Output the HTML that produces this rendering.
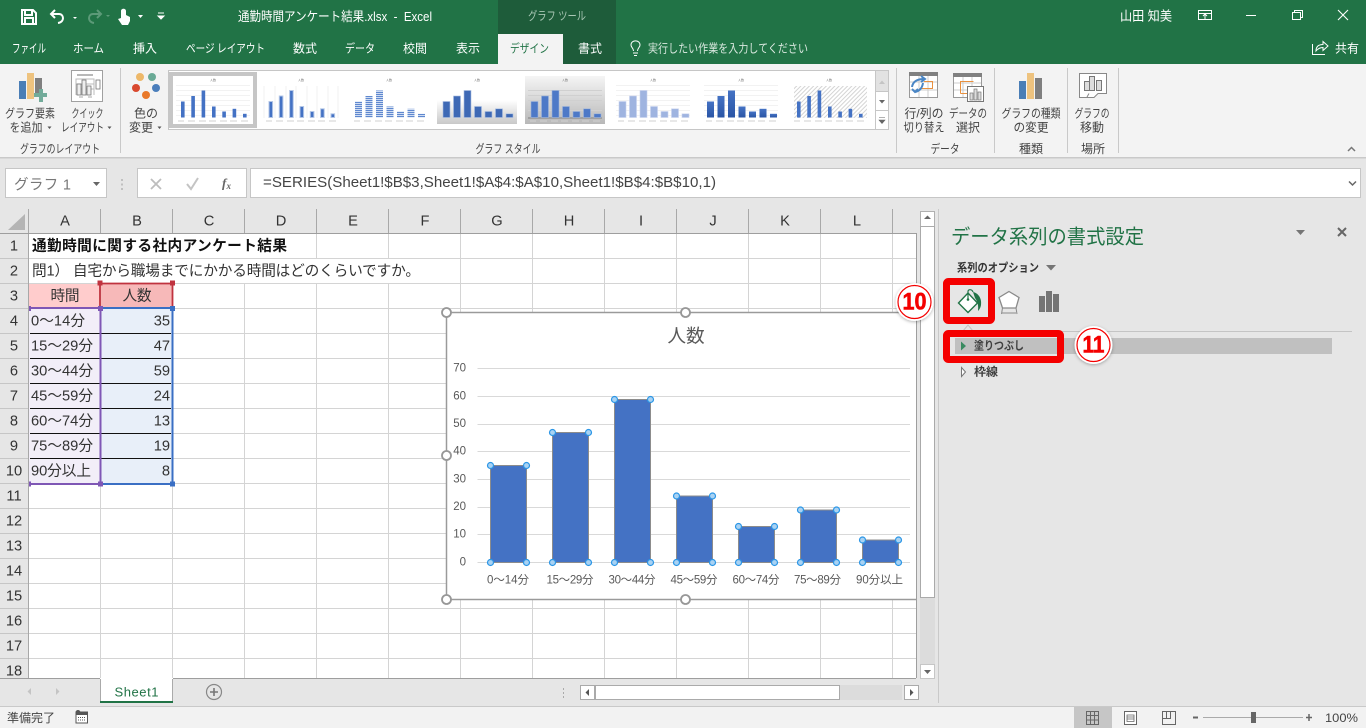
<!DOCTYPE html>
<html lang="ja"><head><meta charset="utf-8"><title>通勤時間アンケート結果.xlsx - Excel</title>
<style>
html,body{margin:0;padding:0;width:1366px;height:728px;overflow:hidden;background:#e6e6e6}
svg{display:block;position:absolute;left:0;top:0}
text{font-family:"Liberation Sans","Noto Sans CJK JP",sans-serif;font-size:12px;dominant-baseline:central;fill:#444;white-space:pre;transform:translateY(1px)}
.w{fill:#fff}.m{text-anchor:middle}.e{text-anchor:end}
.c{font-size:14.67px;fill:#333}
.h{font-size:14.67px;fill:#333;text-anchor:middle}
.ax{font-size:11.5px;fill:#595959}
.r{font-size:12px;fill:#444}
.th{font-size:3px;fill:#777;text-anchor:middle;transform:none}
</style></head><body>
<svg width="1366" height="728" viewBox="0 0 1366 728" xmlns="http://www.w3.org/2000/svg">
<defs>
<g id="bars"><rect x="8" y="25.5" width="3.6" height="16"/><rect x="18.3" y="20" width="3.6" height="21.5"/><rect x="28.6" y="14.5" width="3.6" height="27"/><rect x="39" y="30.5" width="3.6" height="11"/><rect x="49.3" y="35.5" width="3.6" height="6"/><rect x="59.6" y="32.8" width="3.6" height="8.7"/><rect x="70" y="37.8" width="3.6" height="3.7"/></g>
<g id="wide"><rect x="6" y="25.5" width="7" height="16"/><rect x="16.5" y="20" width="7" height="21.5"/><rect x="27" y="14.5" width="7" height="27"/><rect x="37.5" y="30.5" width="7" height="11"/><rect x="48" y="35.5" width="7" height="6"/><rect x="58.5" y="32.8" width="7" height="8.7"/><rect x="69" y="37.8" width="7" height="3.7"/></g>
<path id="gl" d="M3 9.5H77M3 14.5H77M3 19.5H77M3 24.5H77M3 29.5H77M3 34.5H77M3 39.5H77" stroke="#f2f2f2" stroke-width="1" fill="none"/>
<path id="lb" d="M5 45H11M15 45H22M26 45H33M36 45H43M47 45H54M57 45H64M68 45H75" stroke="#d0d0d0" stroke-width="1" fill="none"/>
<pattern id="hatch" width="3" height="3" patternUnits="userSpaceOnUse" patternTransform="rotate(45)"><rect width="3" height="3" fill="#fff"/><rect width="1" height="3" fill="#d4d4d4"/></pattern>
<pattern id="stripe" width="2" height="2" patternUnits="userSpaceOnUse"><rect width="2" height="1" fill="#5f88cf"/><rect y="1" width="2" height="1" fill="#cfdcf2"/></pattern>
<linearGradient id="gw" x1="0" y1="0" x2="0" y2="1"><stop offset="0" stop-color="#fff"/><stop offset=".5" stop-color="#fff"/><stop offset="1" stop-color="#c8c8c8"/></linearGradient>
<linearGradient id="gg" x1="0" y1="0" x2="0" y2="1"><stop offset="0" stop-color="#f5f5f5"/><stop offset="1" stop-color="#b8b8b8"/></linearGradient>
<linearGradient id="gb" x1="0" y1="0" x2="0" y2="1"><stop offset="0" stop-color="#4472c4"/><stop offset="1" stop-color="#2a55a5"/></linearGradient>
<filter id="sh" x="-30%" y="-30%" width="160%" height="160%"><feDropShadow dx="0" dy="1" stdDeviation="1.5" flood-color="#000" flood-opacity=".3"/></filter>
</defs>

<!-- title bar -->
<rect width="1366" height="64" fill="#217346"/>
<rect x="498" width="118" height="64" fill="#1e5c3a"/>
<rect x="498" y="34" width="65" height="30" fill="#f3f3f3"/>
<path d="M22 10H33L36 13V24H22ZM25 10V15H32V10M25 24V18H33V24" fill="none" stroke="#fff" stroke-width="2"/>
<path d="M55 10L51 14L55 18M52 14H59C64 14 65 22 58 23" fill="none" stroke="#fff" stroke-width="2"/>
<path d="M73 17L75 19L77 17Z" fill="#fff"/>
<path d="M97 10L101 14L97 18M100 14H93C88 14 87 22 94 23" fill="none" stroke="#5c9a78" stroke-width="2"/>
<path d="M106 15L108 17L110 15Z" fill="#5c9a78"/>
<path d="M121 18V11C121 8 126 8 126 11V15L130 17V21L128 25H122L118 19Z" fill="#fff"/>
<path d="M138 15L143 15L140.500 18Z" fill="#fff"/>
<path d="M158 13H164M158 16L164 16L161 19Z" stroke="#fff" fill="#fff" stroke-width="1"/>
<text class="w" x="238" y="15.500" style="font-size:13px" textLength="194" lengthAdjust="spacingAndGlyphs">通勤時間アンケート結果.xlsx  -  Excel</text>
<text x="528" y="15" style="fill:#a9c7b5;font-size:12px" textLength="58" lengthAdjust="spacingAndGlyphs">グラフ ツール</text>
<text class="w" x="1120" y="15" style="font-size:13px" textLength="52" lengthAdjust="spacingAndGlyphs">山田 知美</text>
<path d="M1198.500 10.500H1211.500V19.500H1198.500ZM1198.500 13.500H1211.500M1205 19V14.500M1203 16L1205 14L1207 16" fill="none" stroke="#fff"/>
<path d="M1246 15.500H1256" stroke="#fff"/>
<path d="M1292.500 12.500H1300.500V19.500H1292.500ZM1294.500 12V10.500H1302.500V17.500H1301" fill="none" stroke="#fff"/>
<path d="M1338 10L1348 20M1348 10L1338 20" stroke="#fff" stroke-width="1.100"/>
<text class="w" x="12" y="47.500" textLength="34" lengthAdjust="spacingAndGlyphs">ファイル</text>
<text class="w" x="73" y="47.500" textLength="31" lengthAdjust="spacingAndGlyphs">ホーム</text>
<text class="w" x="133" y="47.500" textLength="24" lengthAdjust="spacingAndGlyphs">挿入</text>
<text class="w" x="186" y="47.500" textLength="79" lengthAdjust="spacingAndGlyphs">ページ レイアウト</text>
<text class="w" x="293" y="47.500" textLength="24" lengthAdjust="spacingAndGlyphs">数式</text>
<text class="w" x="345" y="47.500" textLength="30" lengthAdjust="spacingAndGlyphs">データ</text>
<text class="w" x="403" y="47.500" textLength="24" lengthAdjust="spacingAndGlyphs">校閲</text>
<text class="w" x="456" y="47.500" textLength="24" lengthAdjust="spacingAndGlyphs">表示</text>
<text x="510" y="47.500" style="fill:#217346" textLength="39" lengthAdjust="spacingAndGlyphs">デザイン</text>
<text class="w" x="578" y="47.500" textLength="24" lengthAdjust="spacingAndGlyphs">書式</text>
<path d="M633 53H638M634 55.500H637M633.500 51C633.500 48 631 47.500 631 45C631 39.500 640 39.500 640 45C640 47.500 637.500 48 637.500 51" fill="none" stroke="#fff"/>
<text x="648" y="47.500" style="fill:#d9e8df" textLength="160" lengthAdjust="spacingAndGlyphs">実行したい作業を入力してください</text>
<path d="M1312.500 44V54.500H1325M1316 51C1316 46 1319 44.500 1323 44.500V41.500L1328 46L1323 50.500V47.500C1320 47.500 1318 48.500 1316 51Z" fill="none" stroke="#fff"/>
<text class="w" x="1335" y="47.500" textLength="24" lengthAdjust="spacingAndGlyphs">共有</text>

<!-- ribbon -->
<rect y="64" width="1366" height="93" fill="#f3f3f3"/>
<rect y="157" width="1366" height="1.500" fill="#c9c9c9"/>
<path d="M120.500 68V153M896.500 68V153M994.500 68V153M1067.500 68V153M1118.500 68V153" stroke="#c9c9c9"/>
<rect x="19" y="81" width="7" height="18" fill="#4a7eb6"/><rect x="27" y="73" width="7" height="26" fill="#eec37f"/><rect x="35" y="78" width="7" height="19" fill="#7f7f7f"/>
<path d="M39 89H43V93H47V97H43V102H39V97H34V93H39Z" fill="#72ab9a"/>
<rect x="71.500" y="70.500" width="31" height="31" fill="#fff" stroke="#a0a0a0"/>
<path d="M77 75H93" stroke="#a0a0a0" stroke-width="1.500"/>
<path d="M76 95V79H94V95M76 84H94M76 89H94" fill="none" stroke="#bbb"/>
<rect x="77" y="84" width="4" height="11" fill="#eee" stroke="#777" stroke-width=".8"/><rect x="82" y="80" width="4" height="15" fill="#eee" stroke="#777" stroke-width=".8"/><rect x="87" y="86" width="4" height="9" fill="#eee" stroke="#777" stroke-width=".8"/>
<rect x="96" y="80" width="4" height="9" fill="#fff" stroke="#777" stroke-width=".8"/><path d="M79 97H83M88 97H92" stroke="#aaa"/>
<circle cx="140" cy="77" r="4" fill="#edb869"/><circle cx="152" cy="77" r="4" fill="#6aaa96"/><circle cx="136" cy="88" r="4" fill="#d9492f"/><circle cx="156" cy="88" r="4" fill="#4a7ebb"/><circle cx="146" cy="95" r="4" fill="#e9792a"/>
<text class="m r" x="30" y="112.500" textLength="50" lengthAdjust="spacingAndGlyphs">グラフ要素</text>
<text class="m r" x="26" y="126.500" textLength="33" lengthAdjust="spacingAndGlyphs">を追加</text><path d="M47.500 126.500H51.500L49.500 129Z" fill="#555"/>
<text class="m r" x="87.500" y="112.500" textLength="32" lengthAdjust="spacingAndGlyphs">クイック</text>
<text class="m r" x="82.500" y="126.500" textLength="43" lengthAdjust="spacingAndGlyphs">レイアウト</text><path d="M107.500 126.500H111.500L109.500 129Z" fill="#555"/>
<text class="m r" x="146" y="112.500" textLength="24" lengthAdjust="spacingAndGlyphs">色の</text>
<text class="m r" x="141" y="126.500" textLength="24" lengthAdjust="spacingAndGlyphs">変更</text><path d="M157.500 126.500H161.500L159.500 129Z" fill="#555"/>
<text class="m r" x="60" y="148" textLength="80" lengthAdjust="spacingAndGlyphs">グラフのレイアウト</text>
<text class="m r" x="508" y="148" textLength="65" lengthAdjust="spacingAndGlyphs">グラフ スタイル</text>
<text class="m r" x="945" y="148" textLength="29" lengthAdjust="spacingAndGlyphs">データ</text>
<text class="m r" x="1031" y="148" textLength="24" lengthAdjust="spacingAndGlyphs">種類</text>
<text class="m r" x="1093" y="148" textLength="24" lengthAdjust="spacingAndGlyphs">場所</text>
<text class="m r" x="924" y="112.500" textLength="39" lengthAdjust="spacingAndGlyphs">行/列の</text>
<text class="m r" x="924" y="126.500" textLength="41" lengthAdjust="spacingAndGlyphs">切り替え</text>
<text class="m r" x="968" y="112.500" textLength="38" lengthAdjust="spacingAndGlyphs">データの</text>
<text class="m r" x="968" y="126.500" textLength="24" lengthAdjust="spacingAndGlyphs">選択</text>
<text class="m r" x="1031" y="112.500" textLength="59" lengthAdjust="spacingAndGlyphs">グラフの種類</text>
<text class="m r" x="1031" y="126.500" textLength="35" lengthAdjust="spacingAndGlyphs">の変更</text>
<text class="m r" x="1092" y="112.500" textLength="35" lengthAdjust="spacingAndGlyphs">グラフの</text>
<text class="m r" x="1092" y="126.500" textLength="24" lengthAdjust="spacingAndGlyphs">移動</text>
<path d="M1348 151L1351.500 147.500L1355 151" fill="none" stroke="#777" stroke-width="1.500"/>

<!-- ribbon right icons -->
<rect x="909.500" y="72.500" width="28" height="25" fill="#fff" stroke="#999"/><rect x="909" y="72" width="29" height="4" fill="#808080"/>
<path d="M919 76V97M928 76V97M910 82H937M910 90H937" stroke="#ccc"/><path d="M919.500 88.500H932.500V81.500H924" fill="none" stroke="#e9913f"/><path d="M912 87C913 81 918 79 924 79M921 76L925 79L921 82M923 83C922 89 919 91 915 92M912 89L915 92L918 89" fill="none" stroke="#4a86c5" stroke-width="2"/>
<rect x="953.500" y="73.500" width="28" height="24" fill="#fff" stroke="#999"/><rect x="953" y="73" width="29" height="4" fill="#808080"/>
<path d="M963 77V97M972 77V97M954 83H981M954 90H981" stroke="#ccc"/><path d="M960.500 93.500V81.500H973.500M960.500 93.500H968" fill="none" stroke="#e9913f"/>
<rect x="967.500" y="86.500" width="16" height="15" fill="#fff" stroke="#777"/><rect x="970" y="93" width="3" height="7" fill="#ddd" stroke="#777" stroke-width=".7"/><rect x="974" y="89" width="3" height="11" fill="#ddd" stroke="#777" stroke-width=".7"/><rect x="978" y="92" width="3" height="8" fill="#ddd" stroke="#777" stroke-width=".7"/>
<rect x="1019" y="81" width="7" height="18" fill="#4a7eb6"/><rect x="1027" y="73" width="7" height="26" fill="#eec37f"/><rect x="1035" y="78" width="7" height="21" fill="#7f7f7f"/>
<path d="M1079.500 73.500H1106.500V93.500H1098L1094 97.500H1079.500Z" fill="#fff" stroke="#888"/><path d="M1089 93.500L1087 97" stroke="#888"/>
<rect x="1084.500" y="81.500" width="5" height="9" fill="#ddd" stroke="#777"/><rect x="1089.500" y="76.500" width="5" height="14" fill="#ddd" stroke="#777"/><rect x="1096.500" y="80.500" width="5" height="10" fill="#ddd" stroke="#777"/>

<!-- gallery -->
<rect x="168.500" y="70.500" width="720" height="59" fill="#fff" stroke="#c6c6c6"/>
<rect x="168" y="72" width="89" height="56" fill="#c6c6c6"/>
<rect x="875" y="71" width="13" height="20" fill="#e2e2e2"/><path d="M875.500 70V129M875 91.500H888M875 110.500H888" stroke="#c6c6c6"/>
<path d="M879 84H885L882 80.500Z" fill="#c4c4c4"/><path d="M879 100H885L882 103.500Z" fill="#666"/><path d="M879 117.500H885M879 120H885L882 123.500Z" fill="#666" stroke="#666" stroke-width=".6"/>
<g transform="translate(173,76)"><rect width="80" height="48" fill="#fff"/><use href="#gl"/><use href="#bars" fill="#4472c4"/><use href="#lb"/><text class="th" x="40" y="4">人数</text></g>
<g transform="translate(261,76)"><rect width="80" height="48" fill="#fff"/><path d="M3 10V42M14 10V42M25 10V42M35 10V42M46 10V42M56 10V42M67 10V42M77 10V42" stroke="#f2f2f2"/><use href="#bars" fill="#4472c4" stroke="#b4c7e7" stroke-width="1"/><use href="#lb"/><text class="th" x="40" y="4">人数</text></g>
<g transform="translate(349,76)"><rect width="80" height="48" fill="#fff"/><use href="#wide" fill="url(#stripe)"/><use href="#lb"/><text class="th" x="40" y="4">人数</text></g>
<g transform="translate(437,76)"><rect width="80" height="48" fill="url(#gw)"/><use href="#wide" fill="#3e69b5" stroke="#a8bde2" stroke-width=".6"/><use href="#lb"/><text class="th" x="40" y="4">人数</text></g>
<g transform="translate(525,76)"><rect width="80" height="48" fill="url(#gg)"/><path d="M3 14.500H77M3 19.500H77M3 24.500H77M3 29.500H77M3 34.500H77" stroke="#d0d0d0"/><rect x="3" y="41" width="74" height="2" fill="#a0a0a0"/><use href="#wide" fill="#4d79c7" stroke="#9db4da" stroke-width=".6"/><use href="#lb"/><text class="th" x="40" y="4">人数</text></g>
<g transform="translate(613,76)"><rect width="80" height="48" fill="#fff"/><use href="#gl"/><use href="#wide" fill="#9fb4e0" stroke="#c8d3ee" stroke-width=".6"/><use href="#lb"/><text class="th" x="40" y="4">人数</text></g>
<g transform="translate(701,76)"><rect width="80" height="48" fill="#fff"/><use href="#gl"/><use href="#wide" fill="url(#gb)"/><use href="#lb"/><text class="th" x="40" y="4">人数</text></g>
<g transform="translate(789,76)"><rect width="80" height="48" fill="#fff"/><rect x="5" y="10" width="73" height="32" fill="url(#hatch)"/><use href="#bars" fill="#4472c4"/><use href="#lb"/><text class="th" x="40" y="4">人数</text></g>

<!-- formula bar -->
<rect x="5.500" y="168.500" width="101" height="29" fill="#fff" stroke="#c6c6c6"/>
<text x="14" y="184.500" style="font-size:14.500px;fill:#777" textLength="57" lengthAdjust="spacing">グラフ 1</text>
<path d="M93 182H100L96.500 186Z" fill="#666"/>
<path d="M122 179V181M122 183.500V185.500M122 188V190" stroke="#999"/>
<rect x="137.500" y="168.500" width="109" height="29" fill="#fff" stroke="#c6c6c6"/>
<path d="M151 179L161 189M161 179L151 189" stroke="#bdbdbd" stroke-width="1.800"/>
<path d="M187 184L191 189L198 178" fill="none" stroke="#c4c4c4" stroke-width="2"/>
<text x="222" y="182" style="font:italic bold 13px 'Liberation Serif',serif;fill:#666">f</text><text x="226.500" y="185" style="font:italic bold 9px 'Liberation Serif',serif;fill:#666">x</text>
<rect x="250.500" y="168.500" width="1110" height="29" fill="#fff" stroke="#c6c6c6"/>
<text x="263" y="182" style="font-size:14.670px;fill:#444" textLength="453" lengthAdjust="spacingAndGlyphs">=SERIES(Sheet1!$B$3,Sheet1!$A$4:$A$10,Sheet1!$B$4:$B$10,1)</text>
<path d="M1349 181.500L1352.500 185L1356 181.500" fill="none" stroke="#666" stroke-width="1.500"/>

<!-- sheet grid -->
<rect x="29" y="234" width="887" height="444" fill="#fff"/>
<path d="M100.500 234V678M172.500 234V678M244.500 234V678M316.500 234V678M388.500 234V678M460.500 234V678M532.500 234V678M604.500 234V678M676.500 234V678M748.500 234V678M820.500 234V678M892.500 234V678M29 258.500H916M29 283.500H916M29 308.500H916M29 333.500H916M29 358.500H916M29 383.500H916M29 408.500H916M29 433.500H916M29 458.500H916M29 483.500H916M29 508.500H916M29 533.500H916M29 558.500H916M29 583.500H916M29 608.500H916M29 633.500H916M29 658.500H916" stroke="#d4d4d4" fill="none"/>
<path d="M100.500 234V258M172.500 234V258M244.500 234V258M100.500 259V283M172.500 259V283M244.500 259V283M316.500 259V283M388.500 259V283" stroke="#fff"/>
<!-- headers -->
<path d="M28.500 209V678M100.500 209V233M172.500 209V233M244.500 209V233M316.500 209V233M388.500 209V233M460.500 209V233M532.500 209V233M604.500 209V233M676.500 209V233M748.500 209V233M820.500 209V233M892.500 209V233" stroke="#a8a8a8"/>
<path d="M0 233.500H916M0 678.500H916M916.500 233V678" stroke="#9e9e9e"/>
<path d="M0 258.500H28M0 283.500H28M0 308.500H28M0 333.500H28M0 358.500H28M0 383.500H28M0 408.500H28M0 433.500H28M0 458.500H28M0 483.500H28M0 508.500H28M0 533.500H28M0 558.500H28M0 583.500H28M0 608.500H28M0 633.500H28M0 658.500H28" stroke="#c6c6c6"/>
<path d="M8 230H25V214Z" fill="#b4b4b4"/>
<text class="h" x="65" y="220.500">A</text><text class="h" x="137" y="220.500">B</text><text class="h" x="209" y="220.500">C</text><text class="h" x="281" y="220.500">D</text><text class="h" x="353" y="220.500">E</text><text class="h" x="425" y="220.500">F</text><text class="h" x="497" y="220.500">G</text><text class="h" x="569" y="220.500">H</text><text class="h" x="641" y="220.500">I</text><text class="h" x="713" y="220.500">J</text><text class="h" x="785" y="220.500">K</text><text class="h" x="857" y="220.500">L</text>
<text class="h" x="14" y="245.500">1</text><text class="h" x="14" y="270.500">2</text><text class="h" x="14" y="295.500">3</text><text class="h" x="14" y="320.500">4</text><text class="h" x="14" y="345.500">5</text><text class="h" x="14" y="370.500">6</text><text class="h" x="14" y="395.500">7</text><text class="h" x="14" y="420.500">8</text><text class="h" x="14" y="445.500">9</text><text class="h" x="14" y="470.500">10</text><text class="h" x="14" y="495.500">11</text><text class="h" x="14" y="520.500">12</text><text class="h" x="14" y="545.500">13</text><text class="h" x="14" y="570.500">14</text><text class="h" x="14" y="595.500">15</text><text class="h" x="14" y="620.500">16</text><text class="h" x="14" y="645.500">17</text><text class="h" x="14" y="670.500">18</text>

<!-- table -->
<rect x="29" y="284" width="71" height="24" fill="#ffcccc"/><rect x="101" y="284" width="71" height="24" fill="#f7b9b9"/>
<rect x="29" y="309" width="71" height="175" fill="#f2eef8"/><rect x="101" y="309" width="71" height="175" fill="#e8eff9"/>
<path d="M30 333.500H171M30 358.500H171M30 383.500H171M30 408.500H171M30 433.500H171M30 458.500H171" stroke="#111"/>
<path d="M100 283.500V307M172.500 283V307M100 283.500H173" fill="none" stroke="#c0333f" stroke-width="1.800"/>
<path d="M30 308H100M100.500 308V484M30 484H100" fill="none" stroke="#7f57b5" stroke-width="2"/>
<path d="M101 308H172.500V484H101" fill="none" stroke="#3a6fc4" stroke-width="2"/>
<rect x="97.500" y="280.500" width="5" height="5" fill="#c0333f"/><rect x="170" y="280.500" width="5" height="5" fill="#c0333f"/>
<rect x="29" y="306" width="2" height="5" fill="#7f57b5"/><rect x="98" y="306" width="5" height="5" fill="#7f57b5"/><rect x="170" y="306" width="5" height="5" fill="#3a6fc4"/>
<rect x="29" y="481.500" width="2" height="5" fill="#7f57b5"/><rect x="98" y="481.500" width="5" height="5" fill="#7f57b5"/><rect x="170" y="481.500" width="5" height="5" fill="#3a6fc4"/>
<text x="32" y="245.500" style="font-size:14.670px;font-weight:bold;fill:#111" textLength="255">通勤時間に関する社内アンケート結果</text>
<text x="32" y="270.500" class="c" textLength="388">問1） 自宅から職場までにかかる時間はどのくらいですか。</text>
<text x="65" y="295.500" class="c m" textLength="29">時間</text><text x="137" y="295.500" class="c m" textLength="29">人数</text>
<text x="31" y="320.500" class="c" textLength="54">0～14分</text><text x="31" y="345.500" class="c" textLength="62">15～29分</text><text x="31" y="370.500" class="c" textLength="62">30～44分</text><text x="31" y="395.500" class="c" textLength="62">45～59分</text><text x="31" y="420.500" class="c" textLength="62">60～74分</text><text x="31" y="445.500" class="c" textLength="62">75～89分</text><text x="31" y="470.500" class="c" textLength="60">90分以上</text>
<text x="170" y="320.500" class="c e">35</text><text x="170" y="345.500" class="c e">47</text><text x="170" y="370.500" class="c e">59</text><text x="170" y="395.500" class="c e">24</text><text x="170" y="420.500" class="c e">13</text><text x="170" y="445.500" class="c e">19</text><text x="170" y="470.500" class="c e">8</text>

<!-- chart -->
<rect x="447" y="313" width="469" height="286" fill="#fff"/>
<path d="M916 312.500H446.500V599.500H916" fill="none" stroke="#9a9a9a" stroke-width="1.500"/>
<path d="M477.500 368.500H910M477.500 396.500H910M477.500 424.500H910M477.500 451.500H910M477.500 479.500H910M477.500 507.500H910M477.500 534.500H910M477.500 562.500H910" stroke="#d9d9d9"/>
<text x="686" y="335" class="m" style="font-size:18.670px;fill:#595959">人数</text>
<text class="ax e" x="466" y="367.500">70</text><text class="ax e" x="466" y="395.500">60</text><text class="ax e" x="466" y="423">50</text><text class="ax e" x="466" y="450.500">40</text><text class="ax e" x="466" y="478.500">30</text><text class="ax e" x="466" y="506">20</text><text class="ax e" x="466" y="533.500">10</text><text class="ax e" x="466" y="561.500">0</text>
<text class="ax m" x="508" y="579.500" textLength="42">0～14分</text><text class="ax m" x="570" y="579.500" textLength="47">15～29分</text><text class="ax m" x="632" y="579.500" textLength="47">30～44分</text><text class="ax m" x="694" y="579.500" textLength="47">45～59分</text><text class="ax m" x="756" y="579.500" textLength="47">60～74分</text><text class="ax m" x="817.500" y="579.500" textLength="47">75～89分</text><text class="ax m" x="879.500" y="579.500" textLength="47">90分以上</text>
<g fill="#4472c4" stroke="#8c8c8c" stroke-width="1">
<rect x="490.500" y="465.500" width="36" height="97"/><rect x="552.500" y="432.500" width="36" height="130"/><rect x="614.500" y="399.500" width="36" height="163"/><rect x="676.500" y="496" width="36" height="66.500"/><rect x="738.500" y="526.500" width="36" height="36"/><rect x="800.500" y="510" width="36" height="52.500"/><rect x="862.500" y="540" width="36" height="22.500"/></g>
<g fill="#a9d2f3" stroke="#2b96e6" stroke-width="1.200">
<circle cx="490.500" cy="465.500" r="3"/><circle cx="526.500" cy="465.500" r="3"/><circle cx="490.500" cy="562.500" r="3"/><circle cx="526.500" cy="562.500" r="3"/>
<circle cx="552.500" cy="432.500" r="3"/><circle cx="588.500" cy="432.500" r="3"/><circle cx="552.500" cy="562.500" r="3"/><circle cx="588.500" cy="562.500" r="3"/>
<circle cx="614.500" cy="399.500" r="3"/><circle cx="650.500" cy="399.500" r="3"/><circle cx="614.500" cy="562.500" r="3"/><circle cx="650.500" cy="562.500" r="3"/>
<circle cx="676.500" cy="496" r="3"/><circle cx="712.500" cy="496" r="3"/><circle cx="676.500" cy="562.500" r="3"/><circle cx="712.500" cy="562.500" r="3"/>
<circle cx="738.500" cy="526.500" r="3"/><circle cx="774.500" cy="526.500" r="3"/><circle cx="738.500" cy="562.500" r="3"/><circle cx="774.500" cy="562.500" r="3"/>
<circle cx="800.500" cy="510" r="3"/><circle cx="836.500" cy="510" r="3"/><circle cx="800.500" cy="562.500" r="3"/><circle cx="836.500" cy="562.500" r="3"/>
<circle cx="862.500" cy="540" r="3"/><circle cx="898.500" cy="540" r="3"/><circle cx="862.500" cy="562.500" r="3"/><circle cx="898.500" cy="562.500" r="3"/></g>
<g fill="#fff" stroke="#979797" stroke-width="1.800">
<circle cx="446.500" cy="312.500" r="4.500"/><circle cx="685.500" cy="312.500" r="4.500"/><circle cx="446.500" cy="455.500" r="4.500"/><circle cx="446.500" cy="599.500" r="4.500"/><circle cx="685.500" cy="599.500" r="4.500"/></g>

<!-- v scroll -->
<rect x="917" y="209" width="21" height="470" fill="#e6e6e6"/>
<path d="M916.500 233V678" stroke="#9e9e9e"/>
<rect x="920" y="211" width="15" height="468" fill="#dcdcdc"/>
<rect x="920.500" y="211.500" width="14" height="15" fill="#fff" stroke="#b0b0b0"/>
<path d="M924 219H931L927.500 215.500Z" fill="#666"/>
<rect x="920.500" y="226.500" width="14" height="371" fill="#fff" stroke="#aaa"/>
<rect x="920.500" y="664.500" width="14" height="14" fill="#fff" stroke="#c6c6c6"/>
<path d="M924 670H931L927.500 674Z" fill="#666"/>
<path d="M938.500 209V703" stroke="#c9c9c9"/>

<!-- task pane -->
<text x="951" y="236.500" style="font-size:20px;fill:#217346" textLength="193" lengthAdjust="spacingAndGlyphs">データ系列の書式設定</text>
<path d="M1296 230H1305L1300.500 235Z" fill="#757575"/>
<path d="M1338 228L1346 236M1346 228L1338 236" stroke="#666" stroke-width="2"/>
<text x="957" y="267.500" style="font-size:11.500px;font-weight:bold;fill:#333" textLength="82" lengthAdjust="spacingAndGlyphs">系列のオプション</text>
<path d="M1046 265H1056L1051 270.500Z" fill="#757575"/>
<path d="M955 331.500H1352" stroke="#c4c4c4"/>
<path d="M963 331L968 325L973 331" fill="#e6e6e6" stroke="#c4c4c4"/>
<rect x="955" y="338" width="377" height="16" fill="#c0c0c0"/>
<path d="M961 341.500L966 346L961 350.500Z" fill="#3a8a60"/>
<text x="974" y="345.500" style="font-size:11.500px;font-weight:bold;fill:#404040" textLength="50" lengthAdjust="spacingAndGlyphs">塗りつぶし</text>
<path d="M961.500 367.500L965.500 372L961.500 376.500Z" fill="#fff" stroke="#777"/>
<text x="974" y="371.500" style="font-size:11.500px;font-weight:bold;fill:#404040" textLength="24" lengthAdjust="spacingAndGlyphs">枠線</text>
<!-- pane icons -->
<path d="M958.500 303L968 293L977.500 303L968 312.500Z" fill="#fff" stroke="#217346" stroke-width="1.400"/>
<path d="M968 300V291.500C968 289 972 289 973 292" fill="none" stroke="#217346" stroke-width="1.200"/><circle cx="968" cy="299.500" r="1.300" fill="#217346"/>
<path d="M973 292C978 293 982 298 981 305C980.500 308 979 310 978 311C978.500 306 978 302 975 298Z" fill="#217346"/>
<path d="M1009 291.500L1019 297.500L1016 308H1002.500L999 297.500Z" fill="#fff" stroke="#8a8a8a" stroke-width="1.300"/>
<path d="M1002.500 308L1001.500 314M1016 308L1017 314M1002 313H1016" fill="none" stroke="#8a8a8a"/>
<rect x="1039" y="296" width="6" height="16" fill="#757575"/><rect x="1046" y="291" width="6" height="21" fill="#757575"/><rect x="1053" y="294" width="6" height="18" fill="#757575"/>

<!-- annotations -->
<rect x="946.500" y="281.500" width="45" height="39" rx="2" fill="none" stroke="#f40000" stroke-width="7"/>
<rect x="946.500" y="333.500" width="114" height="26" rx="2" fill="none" stroke="#f40000" stroke-width="7"/>
<g filter="url(#sh)"><circle cx="914.500" cy="302" r="19" fill="#fff"/></g>
<circle cx="914.500" cy="302" r="16.500" fill="#fff" stroke="#f40000" stroke-width="1.200"/>
<text class="m" x="914.500" y="301" style="font-size:24px;font-weight:bold;fill:#f40000;stroke:#f40000;stroke-width:.6" textLength="24" lengthAdjust="spacingAndGlyphs">10</text>
<g filter="url(#sh)"><circle cx="1093.500" cy="345" r="19" fill="#fff"/></g>
<circle cx="1093.500" cy="345" r="16.500" fill="#fff" stroke="#f40000" stroke-width="1.200"/>
<text class="m" x="1093.500" y="344" style="font-size:24px;font-weight:bold;fill:#f40000;stroke:#f40000;stroke-width:.6" textLength="22" lengthAdjust="spacingAndGlyphs">11</text>

<!-- sheet tabs -->
<rect x="100" y="678" width="73" height="23" fill="#fff"/>
<path d="M100.500 678V702M172.500 678V702" stroke="#aaa"/>
<rect x="100" y="701" width="73" height="2" fill="#217346"/>
<path d="M100 678.500H173" stroke="#fff"/>
<text x="136.500" y="691" class="m" style="font-size:13px;fill:#217346" textLength="44">Sheet1</text>
<path d="M31 688L27.500 691.500L31 695Z" fill="#c4c4c4"/><path d="M56 688L59.500 691.500L56 695Z" fill="#c4c4c4"/>
<circle cx="214" cy="692" r="7.500" fill="none" stroke="#888" stroke-width="1.200"/><path d="M210 692H218M214 688V696" stroke="#777" stroke-width="1.600"/>
<path d="M563.500 688V690M563.500 692V694M563.500 696V698" stroke="#aaa"/>
<rect x="580" y="685" width="322" height="15" fill="#dcdcdc"/>
<rect x="580.500" y="685.500" width="14" height="14" fill="#fff" stroke="#aaa"/><path d="M589 689V696L585.500 692.500Z" fill="#555"/>
<rect x="595.500" y="685.500" width="244" height="14" fill="#fff" stroke="#aaa"/>
<rect x="904.500" y="685.500" width="14" height="14" fill="#fff" stroke="#aaa"/><path d="M910 689V696L913.500 692.500Z" fill="#555"/>

<!-- status bar -->
<rect y="706" width="1366" height="22" fill="#f2f2f2"/>
<path d="M0 706.500H1366" stroke="#c9c9c9"/>
<text x="7" y="717" style="font-size:12px;fill:#444" textLength="48" lengthAdjust="spacingAndGlyphs">準備完了</text>
<circle cx="78" cy="712.500" r="2.500" fill="#555"/><path d="M76 712H87.500V723H76Z" fill="#fff" stroke="#555"/><path d="M76 712H87V715H76Z" fill="#555"/><path d="M78 717.500H86M78 720H86" stroke="#555" stroke-dasharray="1 1"/>
<rect x="1074" y="707" width="38" height="21" fill="#c6c6c6"/>
<path d="M1086.500 711.500H1098.500V724.500H1086.500ZM1090.500 711.500V724.500M1094.500 711.500V724.500M1086.500 715.500H1098.500M1086.500 720H1098.500" fill="none" stroke="#666"/>
<path d="M1124.500 711.500H1136.500V724.500H1124.500Z" fill="#fff" stroke="#666"/><path d="M1127 715H1134V721.500H1127ZM1127 717H1134M1127 719H1134" fill="none" stroke="#666" stroke-width=".8"/>
<path d="M1162.500 711.500H1175.500V724.500H1162.500ZM1162.500 718.500H1170.500V711.500M1166.500 711.500V718" fill="none" stroke="#666"/>
<path d="M1193 717.500H1198" stroke="#666" stroke-width="2"/>
<path d="M1203 717.500H1303" stroke="#aaa"/>
<rect x="1251" y="712" width="5" height="11" fill="#666"/>
<path d="M1306 717.500H1312M1309 714V721" stroke="#666" stroke-width="1.500"/>
<text x="1325" y="717" style="font-size:12px;fill:#444" textLength="33" lengthAdjust="spacingAndGlyphs">100%</text>
</svg>
</body></html>
